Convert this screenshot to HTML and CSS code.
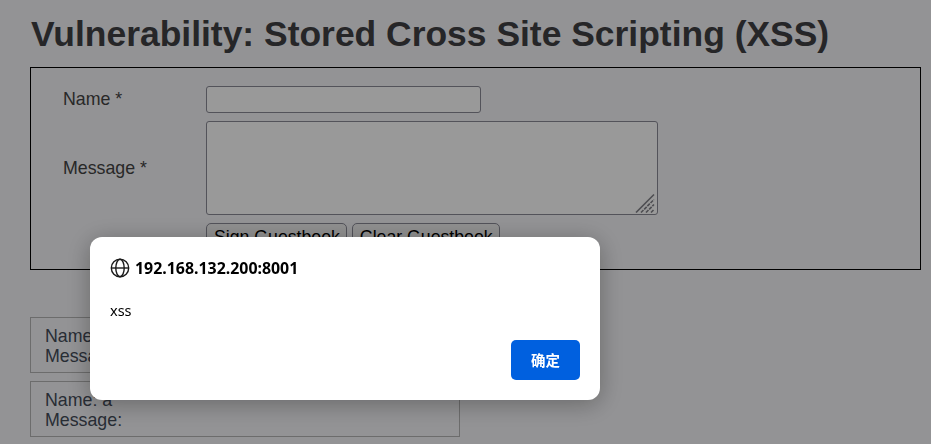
FILE: index.html
```html
<!DOCTYPE html>
<html lang="en">
<head>
<meta charset="utf-8">
<title>Vulnerability: Stored Cross Site Scripting (XSS)</title>
<link rel="stylesheet" href="styles.css">
</head>
<body>
<div class="page">
  <h1 class="title">Vulnerability: Stored Cross Site Scripting (XSS)</h1>
  <form class="guest-form">
    <div class="form-grid">
      <label class="label label-name">Name *</label>
      <input class="name-input" type="text">
      <label class="label">Message *</label>
      <div class="message-wrap">
        <textarea class="message-input"></textarea>
        <svg class="grip" viewBox="0 0 20 20" width="20" height="20" aria-hidden="true">
          <path d="M1 19.5L19 1.5"/>
          <path class="dash" d="M6 19.5L19 6.5"/>
          <path class="dash" d="M11 19.5L19 11.5"/>
          <path class="dash" d="M16 19.5L19 16.5"/>
        </svg>
      </div>
      <div class="buttons">
        <button type="button" class="page-btn">Sign Guestbook</button>
        <button type="button" class="page-btn">Clear Guestbook</button>
      </div>
    </div>
  </form>
  <div class="entries">
    <div class="entry">Name: test<br>Message: This is a test comment.</div>
    <div class="entry">Name: a<br>Message:</div>
  </div>
</div>
<div class="overlay"></div>
<div class="dialog" role="alertdialog">
  <div class="dialog-head">
    <svg class="globe" viewBox="0 0 20 20" width="20" height="20" aria-hidden="true">
      <circle cx="10" cy="10" r="8.7"/>
      <ellipse cx="10" cy="10" rx="4.2" ry="8.7"/>
      <path d="M1.3 10H18.7"/>
    </svg>
    <span class="origin">192.168.132.200:8001</span>
  </div>
  <div class="dialog-msg">xss</div>
  <div class="dialog-foot"><button type="button" class="ok">确定</button></div>
</div>
</body>
</html>
```

FILE: styles.css
```css
* { box-sizing: border-box; }
html, body { margin: 0; height: 100%; }
body {
  background: #f5f5f8;
  overflow: hidden;
  font-family: "Liberation Sans", Arial, sans-serif;
  color: #444;
}
.page { padding: 15px 10px 0 30px; }
.title {
  margin: 0 0 14px 1px;
  font-size: 35.45px;
  line-height: 38px;
  font-weight: 700;
  color: #404044;
}
.guest-form {
  height: 203px;
  border: 1px solid #000;
  overflow: hidden;
}
.form-grid {
  display: grid;
  grid-template-columns: 143px auto;
  justify-content: start;
  row-gap: 8px;
  padding: 18px 0 0 32px;
}
.label { font-size: 17.8px; line-height: 26px; align-self: center; }
.label-name { align-self: start; }
.name-input {
  width: 275px;
  height: 27px;
  border: 1px solid #8a8a96;
  border-radius: 3px;
  background: #fff;
}
.message-wrap { position: relative; width: 452px; height: 94px; }
.message-input {
  display: block;
  width: 452px;
  height: 94px;
  border: 1px solid #8a8a96;
  border-radius: 3px;
  background: #fff;
  resize: none;
}
.grip {
  position: absolute;
  right: 3px;
  bottom: 2px;
  fill: none;
  stroke: #808088;
  stroke-width: 1.6;
}
.grip .dash { stroke-dasharray: 3.5 1; }
.buttons { grid-column: 2; display: flex; gap: 5px; }
.page-btn {
  height: 30px;
  padding: 0 6px 2px 7px;
  border: 1px solid #8a8a96;
  border-radius: 5px;
  background: #f0f0f0;
  font: 17.7px/24px "Liberation Sans", Arial, sans-serif;
  color: #000;
  white-space: nowrap;
}
.entries { margin-top: 47px; display: flex; flex-direction: column; gap: 8px; }
.entry {
  width: 430px;
  height: 56px;
  padding: 8px 14px 0;
  border: 1px solid #b5b5b5;
  font-size: 17.8px;
  line-height: 20px;
  color: #444c58;
}
.overlay { position: fixed; inset: 0; background: rgba(0, 0, 0, .4); }
.dialog {
  position: fixed;
  left: 90px;
  top: 237px;
  width: 510px;
  height: 163px;
  padding: 20px;
  background: #fff;
  border-radius: 12px;
  box-shadow: 0 4px 24px rgba(0, 0, 0, .3);
  display: flex;
  flex-direction: column;
  color: #000;
  font-family: "Noto Sans", "Open Sans", sans-serif;
}
.dialog-head { display: flex; align-items: center; gap: 5px; height: 22px; }
.globe { flex: none; fill: none; stroke: #1a1a1a; stroke-width: 1.4; }
.origin { font-size: 15.9px; font-weight: 700; white-space: nowrap; }
.dialog-msg { margin-top: 21px; font-size: 14.5px; line-height: 20px; }
.dialog-foot { margin-top: auto; display: flex; justify-content: flex-end; }
.ok {
  width: 69px;
  height: 40px;
  padding: 0 0 2px;
  border: 0;
  border-radius: 5px;
  background: #0060df;
  color: #fff;
  font: 700 14.5px "Noto Sans CJK SC", sans-serif;
}
```
